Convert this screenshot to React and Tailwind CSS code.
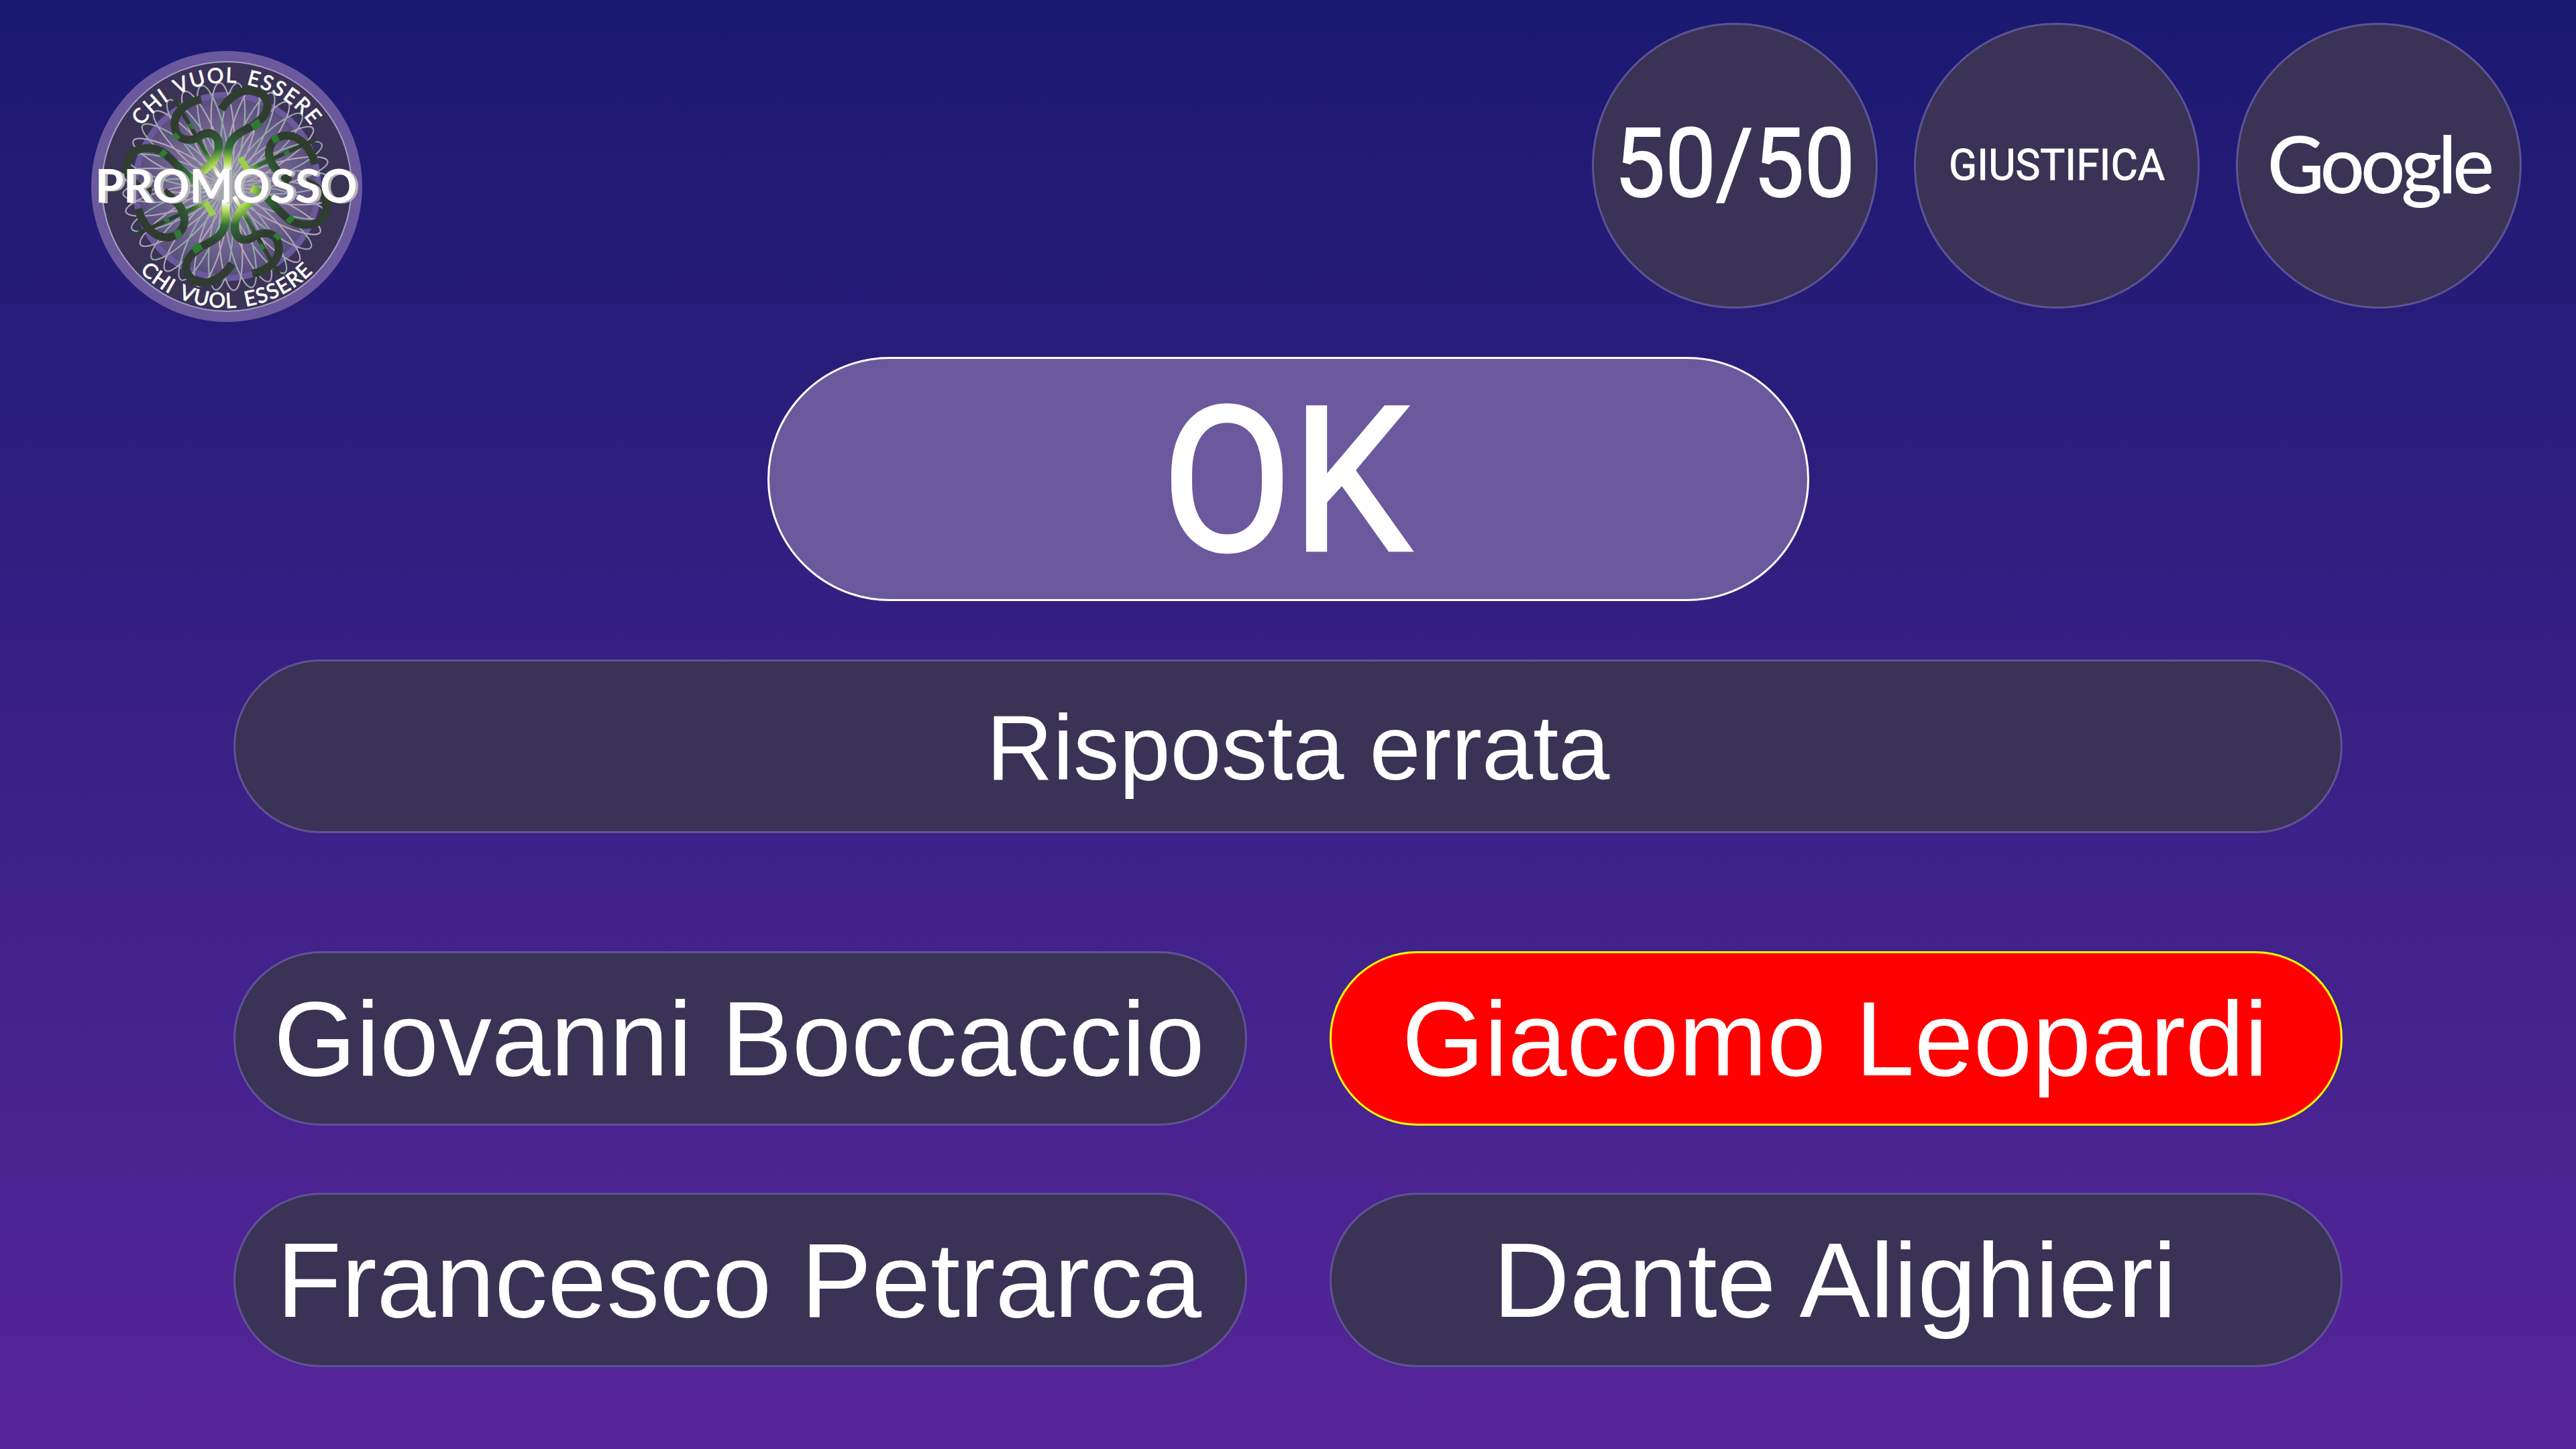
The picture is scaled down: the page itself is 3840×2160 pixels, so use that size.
import React from "react";

const Pill = ({ children, red }) => (
  <div
    className={
      red
        ? "h-[260px] rounded-[130px] border-[3px] border-[#ffff00] bg-[#ff0000] flex items-center justify-center text-white text-[158px] leading-none pr-[3px] whitespace-nowrap font-['Liberation_Sans',sans-serif]"
        : "h-[260px] rounded-[130px] border-[3px] border-[#5f5295] bg-[#3a3355] flex items-center justify-center text-white text-[158px] leading-none pr-[3px] whitespace-nowrap font-['Liberation_Sans',sans-serif]"
    }
  >
    {children}
  </div>
);

const Circle = ({ children }) => (
  <div className="w-[426px] h-[426px] rounded-full border-[3px] border-[#5f5295] bg-[#3a3355] flex items-center justify-center text-white overflow-hidden">
    {children}
  </div>
);

function Halves() {
  const dark = "url(#dollarGrad)";
  return (
    <g fill="none">
      {/* vertical bars of the dollar signs */}
      <path d="M124 71 L191 187" stroke={dark} strokeWidth="6" />
      <path d="M336 131 L237 176" stroke={dark} strokeWidth="6" />
      <path d="M222 159 L234 179" stroke="#9ccf4c" strokeWidth="9" />
      {/* S curves */}
      <path d="M194 87 C210 62 240 48 258 68 C272 88 252 104 240 112 C225 120 205 128 204 150 L203 182" stroke={dark} strokeWidth="12" />
      <path d="M164 72 C140 76 120 95 125 115 C128 135 150 137 165 125 C180 118 192 128 190 145 C188 160 178 170 165 180" stroke={dark} strokeWidth="12" />
      <path d="M90 210 C65 205 50 185 54 165 C58 145 85 140 105 150 C125 162 135 185 165 200" stroke={dark} strokeWidth="12" />
      <path d="M334 169 C328 145 310 125 290 126 C270 128 262 145 266 160 C272 178 285 185 296 195" stroke={dark} strokeWidth="12" />
      {/* brighter green bands */}
      <path d="M252 106 L240 114" stroke="#2f7a35" strokeWidth="12" />
      <path d="M147 108 L152 116" stroke="#2f7a35" strokeWidth="6" />
      <path d="M123 124 L130 131" stroke="#2f7a35" strokeWidth="8" />
      <path d="M104 150 L110 156" stroke="#2f7a35" strokeWidth="12" />
      <path d="M270 133 L279 129" stroke="#2f7a35" strokeWidth="12" />
      <path d="M288 154 L295 150" stroke="#2f7a35" strokeWidth="6" />
    </g>
  );
}

function Logo() {
  const loops = [];
  for (let i = 0; i < 36; i++) {
    loops.push(
      <path
        key={i}
        d="M202 202 C175 150 185 47 202 47 C219 47 229 150 202 202"
        fill="none"
        stroke={i % 2 ? "#93a8a8" : "#b0a4b4"}
        strokeWidth="2.2"
        transform={`rotate(${i * 10 - 4} 202 202)`}
      />
    );
  }
  return (
    <svg width="404" height="404" viewBox="0 0 404 404" className="block overflow-visible">
      <defs>
        <radialGradient id="innerGrad">
          <stop offset="0" stopColor="#9c8fb5" />
          <stop offset="1" stopColor="#574b7a" />
        </radialGradient>
        <radialGradient id="dollarGrad" gradientUnits="userSpaceOnUse" cx="202" cy="202" r="90">
          <stop offset="0.25" stopColor="#ffffff" />
          <stop offset="0.42" stopColor="#a8d84f" />
          <stop offset="0.65" stopColor="#2f6b35" />
          <stop offset="1" stopColor="#2f3d30" />
        </radialGradient>
        <path id="arcTop" d="M 47 202 A 155 155 0 0 1 357 202" />
        <path id="arcBot" d="M 21 202 A 181 181 0 0 0 383 202" />
      </defs>
      <circle cx="202" cy="202" r="202" fill="#6a599d" />
      <circle cx="202" cy="202" r="186" fill="#3a3355" stroke="#a79fc4" strokeWidth="2" />
      <circle cx="202" cy="202" r="136.5" fill="url(#innerGrad)" stroke="#6a599d" strokeWidth="9" />
      {loops}
      <Halves />
      <g transform="rotate(180 202 202)">
        <Halves />
      </g>
      <text fill="#fff" stroke="#fff" strokeWidth="0.8" fontFamily="Lato, sans-serif" fontSize="31" letterSpacing="2" wordSpacing="4" textAnchor="middle">
        <textPath href="#arcTop" startOffset="50%">CHI VUOL ESSERE</textPath>
      </text>
      <text fill="#fff" stroke="#fff" strokeWidth="0.8" fontFamily="Lato, sans-serif" fontSize="31" letterSpacing="1.5" wordSpacing="4" textAnchor="middle">
        <textPath href="#arcBot" startOffset="50%">CHI VUOL ESSERE</textPath>
      </text>
      <text x="205" y="227" fill="#b5b5b5" fontFamily="Lato, sans-serif" fontWeight="700" fontSize="69" letterSpacing="-0.5" textAnchor="middle">PROMOSSO</text>
      <text x="201" y="226" fill="#fff" fontFamily="Lato, sans-serif" fontWeight="700" fontSize="69" letterSpacing="-0.5" textAnchor="middle">PROMOSSO</text>
    </svg>
  );
}

export default function App() {
  return (
    <div className="w-[3840px] h-[2160px] overflow-hidden pt-[34px] bg-gradient-to-b from-[#191970] to-[#56259a]">
      <div className="h-[426px] flex items-start pl-[136px] pr-[81px]">
        <div className="mt-[42px]">
          <Logo />
        </div>
        <div className="ml-auto flex gap-[54px]">
          <Circle>
            <span className="font-['Roboto',sans-serif] font-normal [-webkit-text-stroke:2px_white] text-[142px] leading-none scale-x-[0.95] whitespace-nowrap pb-1">50/50</span>
          </Circle>
          <Circle>
            <span className="font-['Roboto',sans-serif] font-normal [-webkit-text-stroke:1px_white] text-[64px] leading-none scale-x-[0.97] whitespace-nowrap">GIUSTIFICA</span>
          </Circle>
          <Circle>
            <span className="font-['Lato',sans-serif] font-medium text-[117px] leading-none tracking-[-6px] whitespace-nowrap pb-2">Google</span>
          </Circle>
        </div>
      </div>
      <div className="mt-[72px] mx-auto w-[1553px] h-[364px] rounded-[182px] border-[3px] border-white bg-[#6a599d] flex items-center justify-center text-white">
        <span className="font-['Roboto',sans-serif] text-[300px] leading-none scale-x-[0.94] font-normal [-webkit-text-stroke:5px_white] pt-2 pr-[6px]">OK</span>
      </div>
      <div className="mt-[87px] mx-[348px] h-[259px] rounded-[130px] border-[3px] border-[#5f5295] bg-[#3a3355] flex items-center justify-center text-white text-[137px] leading-none pl-[30px] pt-1 font-['Liberation_Sans',sans-serif]">
        Risposta errata
      </div>
      <div className="mt-[176px] mx-[348px] grid grid-cols-2 gap-x-[123px] gap-y-[100px]">
        <Pill>Giovanni Boccaccio</Pill>
        <Pill red>Giacomo Leopardi</Pill>
        <Pill>Francesco Petrarca</Pill>
        <Pill>Dante Alighieri</Pill>
      </div>
    </div>
  );
}
